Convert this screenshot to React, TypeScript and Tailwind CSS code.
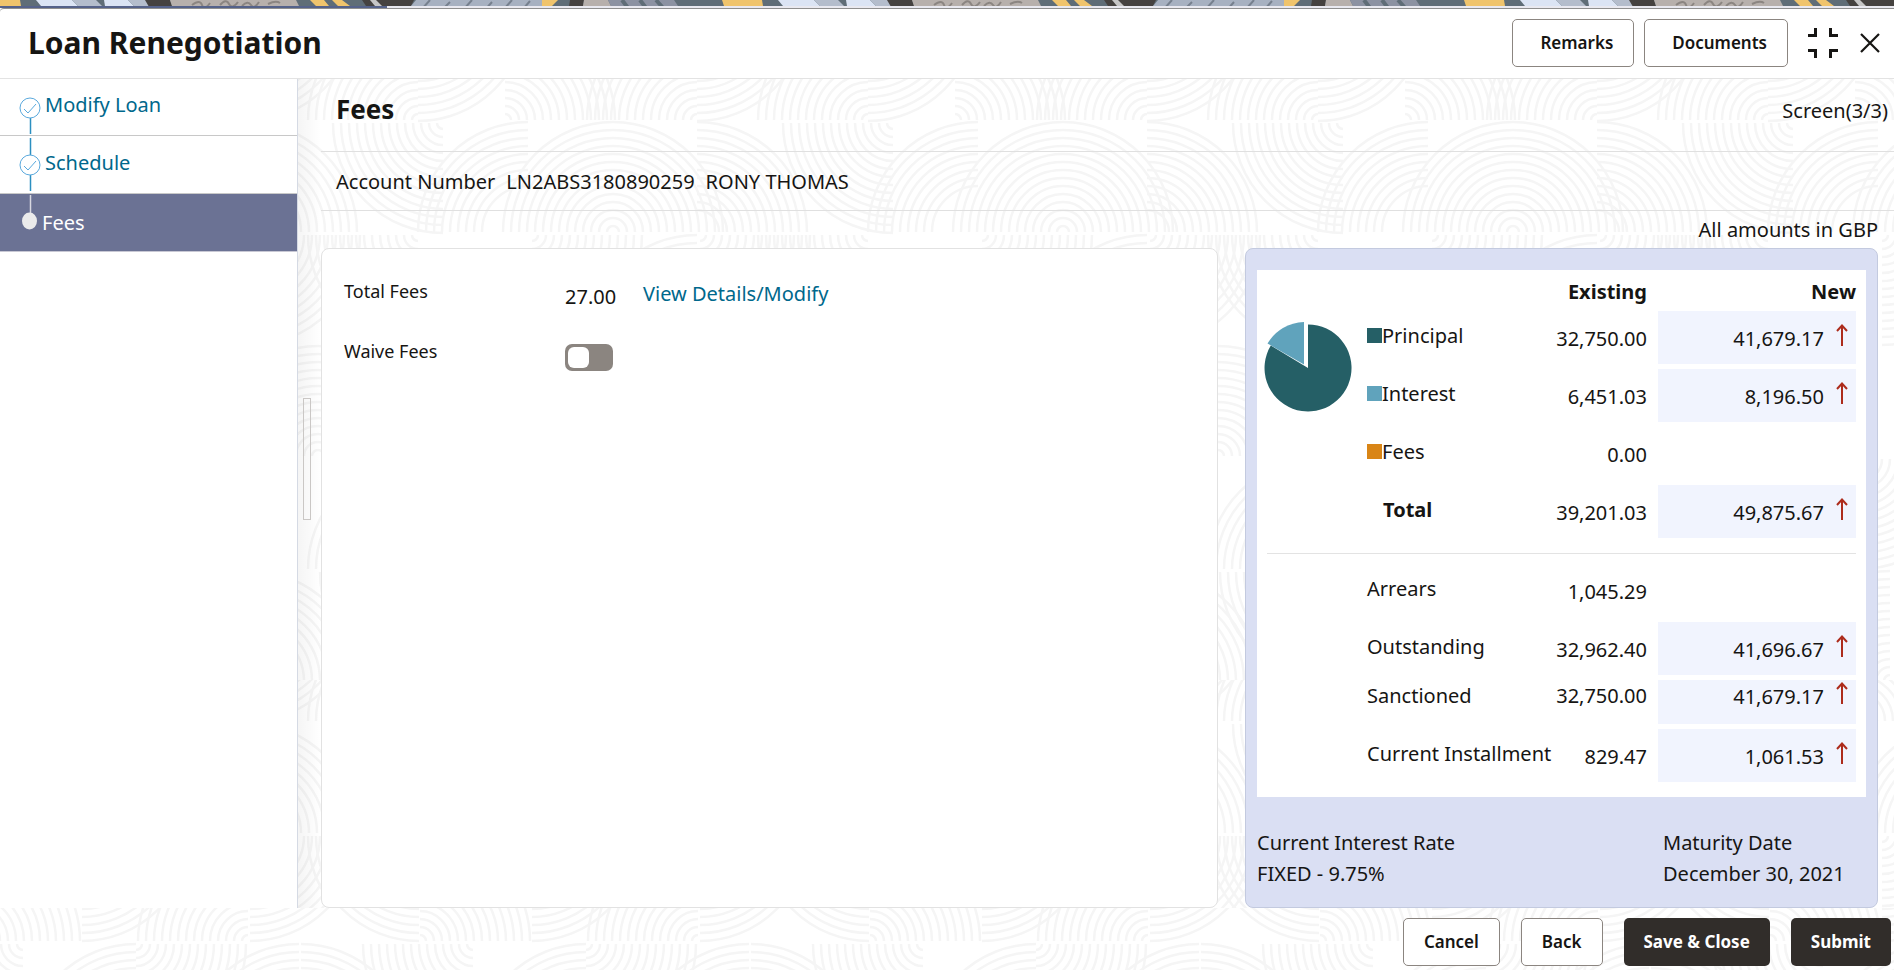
import { useState } from 'react';

type Quadrant = 'UL' | 'UR' | 'LL' | 'LR';
type Fan = { x: number; y: number; q: Quadrant; from?: number; to?: number };

type AmountRow = { label: string; swatch?: string; bold?: boolean; existing: string; next?: string; compact?: boolean };

const TILE_WIDTH = 450;

// Concentric quarter circles that make up the page background
const BODY_FANS: Fan[] = [
    { x: 418, y: 41, q: 'UL' },
    { x: 418, y: -66, q: 'LR', from: 60, to: 108 },
    { x: 247, y: 41, q: 'UL' },
    { x: 247, y: -66, q: 'LR', from: 60, to: 108 },
    { x: 55, y: 41, q: 'UR' },
    { x: 443, y: 44, q: 'LL' },
    { x: 78, y: 153, q: 'UL', from: 40 },
    { x: 163, y: 153, q: 'UL' },
    { x: 163, y: 153, q: 'UR' },
    { x: 247, y: 153, q: 'UR', from: 20 },
    { x: 82, y: 156, q: 'LR' },
    { x: 250, y: 156, q: 'LR' },
    { x: 418, y: 156, q: 'LL' },
    { x: 247, y: 266, q: 'UL', from: 60 },
    { x: 318, y: 377, q: 'UR' },
    { x: 318, y: 377, q: 'UL' },
    { x: 150, y: 377, q: 'UR' },
    { x: 418, y: 490, q: 'UL' },
    { x: 60, y: 380, q: 'LR' },
    { x: 250, y: 602, q: 'UR' },
    { x: 430, y: 493, q: 'LL' },
    { x: 90, y: 602, q: 'UL' },
];

const FOOTER_FANS: Fan[] = [
    { x: 420, y: 33, q: 'UR' },
    { x: 82, y: -75, q: 'LR', from: 60, to: 108 },
    { x: 248, y: 33, q: 'UL' },
    { x: 250, y: -75, q: 'LR', from: 60, to: 108 },
    { x: 419, y: -75, q: 'LL', from: 60, to: 108 },
    { x: 23, y: 36, q: 'LL' },
    { x: 136, y: 36, q: 'LR' },
    { x: 136, y: 146, q: 'UL', from: 40 },
    { x: 299, y: 146, q: 'UL', from: 40 },
    { x: 301, y: 146, q: 'UR', from: 40 },
];

const SUMMARY_ROWS: AmountRow[] = [
    { label: 'Principal', swatch: 'bg-[#255f66]', existing: '32,750.00', next: '41,679.17' },
    { label: 'Interest', swatch: 'bg-[#60a3bc]', existing: '6,451.03', next: '8,196.50' },
    { label: 'Fees', swatch: 'bg-[#d98516]', existing: '0.00' },
    { label: 'Total', bold: true, existing: '39,201.03', next: '49,875.67' },
];

const BALANCE_ROWS: AmountRow[] = [
    { label: 'Arrears', existing: '1,045.29' },
    { label: 'Outstanding', existing: '32,962.40', next: '41,696.67' },
    { label: 'Sanctioned', existing: '32,750.00', next: '41,679.17', compact: true },
    { label: 'Current Installment', existing: '829.47', next: '1,061.53' },
];

const fanPath = ({ x, y, q, from = 6, to = 110 }: Fan) => {
    const dx = q === 'UL' || q === 'LL' ? -1 : 1;
    const dy = q === 'UL' || q === 'UR' ? -1 : 1;
    const sweep = dx * dy === 1 ? 1 : 0;
    let d = '';
    for (let r = to; r >= from; r -= 8) {
        d += `M${x + dx * r} ${y}A${r} ${r} 0 0 ${sweep} ${x} ${y + dy * r}`;
    }
    return d;
};

const Waves = ({ id, fans, height }: { id: string; fans: Fan[]; height: number }) => (
    <svg className="absolute inset-0 w-full h-full -z-10" aria-hidden="true">
        <defs>
            <pattern id={id} width={TILE_WIDTH} height={height} patternUnits="userSpaceOnUse">
                {[-TILE_WIDTH, 0, TILE_WIDTH].map(shift => (
                    <g key={shift} transform={`translate(${shift} 0)`} fill="none" stroke="#f5f5f5" strokeWidth="2.500">
                        {fans.map((fan, i) => <path key={i} d={fanPath(fan)} />)}
                    </g>
                ))}
            </pattern>
        </defs>
        <rect width="100%" height="100%" fill={`url(#${id})`} />
    </svg>
);

const Banner = () => (
    <svg className="block w-full h-[6px]" aria-hidden="true">
        <defs>
            <pattern id="banner" x="-20" width="742" height="12" patternUnits="userSpaceOnUse">
                <rect width="742" height="12" fill="#5f6d77" />
                <path d="M0 0H40L42 12H4Z" fill="#f0c46c" />
                <path d="M56 0H92L104 12H66Z" fill="#dbe4f4" />
                <path d="M92 0H116L128 12H104Z" fill="#b4bdcc" />
                <path d="M124 0H148L160 12H126Z" fill="#dbe4f4" />
                <path d="M148 0H168L174 12H160Z" fill="#b4bdcc" />
                <path d="M165 0H190L194 12H172Z" fill="#454240" />
                <path d="M190 0H316L322 12H194Z" fill="#b7b0ac" />
                <path d="M212 5q8-6 10 0t8-2M240 5q6-7 9-1t9-2M262 6q6-6 9-1t8-3M288 4q8-4 12-1" fill="none" stroke="#8b8581" strokeWidth="2" />
                <path d="M330 0H344L354 12H342ZM352 0H362L370 6H358Z" fill="#f0c46c" />
                <path d="M382 0H434L428 12H390Z" fill="#454240" />
                <path d="M390 0H396L408 12H400Z" fill="#c6c6c6" />
                <path d="M436 0H566L562 12H426Z" fill="#a7b1c1" />
                <path d="M450 0l-8 9M470 2l-8 8M492 0l-8 9M512 2l-7 8M532 0l-7 8M550 1l-6 7" stroke="#76808e" strokeWidth="2" />
                <path d="M562 0H578L566 12H562Z" fill="#f0c46c" />
                <path d="M590 0H604L602 12H588Z" fill="#454240" />
                <path d="M604 0H628L634 12H602Z" fill="#b7b0ac" />
                <path d="M628 0H694L702 12H634Z" fill="#8c92a2" />
                <path d="M642 0l6 8M660 0l6 8M676 0l8 9" stroke="#5f6d77" strokeWidth="4" />
            </pattern>
        </defs>
        <rect width="100%" height="6" fill="url(#banner)" />
    </svg>
);

const UpArrow = () => (
    <svg className="w-3 h-[22px] shrink-0 mb-[7px]" viewBox="0 0 12 22" fill="none" stroke="#ad2c1c" strokeWidth="2" role="img" aria-label="Increased">
        <path d="M6 22V1.500M1 7L6 1.500L11 7" />
    </svg>
);

const PieChart = () => (
    <svg className="w-[90px] h-[94px] -ml-1" viewBox="0 0 90 94" role="img" aria-label="Principal and interest split">
        <path d="M45 49V5.500A43.500 43.500 0 1 1 7.800 26.500Z" fill="#255f66" />
        <path d="M41 45.500V3A43.500 43.500 0 0 0 4.500 24.500Z" fill="#60a3bc" />
    </svg>
);

const AmountCells = ({ row }: { row: AmountRow }) => {
    const size = row.compact ? 'h-[44px] align-top pt-[2px]' : 'h-[53px] align-middle pb-1';
    const align = row.compact ? 'align-top' : 'align-middle';

    return (
        <>
            <th scope="row" className={`${size} text-left whitespace-nowrap ${row.bold ? 'font-bold' : 'font-normal'}`}>
                <span className="flex items-center">
                    {row.swatch && <span className={`w-[15px] h-[15px] ${row.swatch}`}></span>}
                    <span className={row.bold ? 'pl-4' : ''}>{row.label}</span>
                </span>
            </th>
            <td className={`${align} text-right pr-[11px] pt-[2px]`}>{row.existing}</td>
            <td className={row.next ? `${align} bg-[#f1f4fe]` : ''}>
                {row.next && (
                    <span className="flex items-center justify-end gap-3 pr-2 pt-[2px]">
                        <span>{row.next}</span>
                        <UpArrow />
                    </span>
                )}
            </td>
        </>
    );
};

const AmountColumns = () => (
    <colgroup>
        <col className="w-[100px]" />
        <col />
        <col className="w-[104px]" />
        <col className="w-[198px]" />
    </colgroup>
);

const CheckStep = ({ first }: { first?: boolean }) => (
    <svg className="w-6 h-[57px] shrink-0" viewBox="0 0 24 57" fill="none" stroke="#2b8fc0" aria-hidden="true">
        {!first && <path d="M12.500 2V19" strokeWidth="1.500" />}
        <path d="M12.500 39V55" strokeWidth="1.500" />
        <circle cx="12" cy="29" r="10" stroke="#5aa9dd" />
        <path d="M6 30L10 34L18 25" stroke="#5aa9dd" />
    </svg>
);

const outlineButton = 'h-12 rounded-[5px] border border-[#8b8580] bg-white text-[17px] font-semibold cursor-pointer hover:bg-gray-50';
const darkButton = 'h-12 rounded-[5px] bg-[#312d2a] px-5 text-[17px] font-bold text-white cursor-pointer hover:bg-black';

export default function App() {
    const [waive, setWaive] = useState(false);

    return (
        <div className="min-h-screen flex flex-col bg-white text-[#161513] text-[20px] leading-7 font-['Noto_Sans',sans-serif]">
            <Banner />
            <div className="h-[2px] flex bg-[#e9e9f0]">
                <div className="w-[387px] bg-[#55628a]"></div>
            </div>

            <header className="h-[71px] flex items-center border-t border-t-[#8f8f8f] border-b border-b-[#e3e3e3] rounded-tl-sm pl-7 pr-[14px] pb-[2px]">
                <h1 className="text-[30px] leading-9 font-bold">Loan Renegotiation</h1>
                <div className="ml-auto flex items-center">
                    <button type="button" className={`${outlineButton} pl-[27px] pr-5`}>Remarks</button>
                    <button type="button" className={`${outlineButton} ml-[10px] pl-[27px] pr-5`}>Documents</button>
                    <button type="button" aria-label="Collapse" className="ml-5 cursor-pointer">
                        <svg className="w-[30px] h-[30px]" viewBox="0 0 30 30" fill="none" stroke="#161513" strokeWidth="3">
                            <path d="M0 7.500H7.500V0M22.500 0V7.500H30M0 22.500H7.500V30M22.500 30V22.500H30" />
                        </svg>
                    </button>
                    <button type="button" aria-label="Close" className="ml-[22px] cursor-pointer">
                        <svg className="w-5 h-5" viewBox="0 0 20 20" fill="none" stroke="#161513" strokeWidth="2.200">
                            <path d="M1 1L19 19M19 1L1 19" />
                        </svg>
                    </button>
                </div>
            </header>

            <div className="flex-1 flex relative isolate">
                <Waves id="waves-body" fans={BODY_FANS} height={601} />

                <nav aria-label="Steps" className="w-[298px] shrink-0 bg-white border-r border-[#d5dae4]">
                    <ol>
                        <li className="h-[57px] flex items-center pl-[18px] border-b border-[#c8c8c8]">
                            <CheckStep first />
                            <a href="#modify" className="pl-[3px] pb-1 text-[#00688c]">Modify Loan</a>
                        </li>
                        <li className="h-[58px] flex items-center pl-[18px] border-b border-[#c8c8c8]">
                            <CheckStep />
                            <a href="#schedule" className="pl-[3px] pb-1 text-[#00688c]">Schedule</a>
                        </li>
                        <li className="h-[58px] flex items-center pl-[18px] border-b border-[#c8c8d4] bg-[#6b7294] text-white">
                            <svg className="w-6 h-[57px] shrink-0" viewBox="0 0 24 57" aria-hidden="true">
                                <path d="M12.500 1V22" stroke="#d8d8e0" strokeWidth="1.500" />
                                <ellipse cx="11.500" cy="27" rx="7.500" ry="8.500" fill="#ebebeb" />
                            </svg>
                            <a href="#fees" aria-current="step">Fees</a>
                        </li>
                    </ol>
                </nav>

                <div className="w-[23px] shrink-0 pl-[5px] pt-[319px] bg-linear-to-r from-black/4 to-transparent">
                    <div className="w-2 h-[122px] border border-[#cac7c5]"></div>
                </div>

                <main className="flex-1 min-w-0 flex flex-col">
                    <div className="h-[73px] flex justify-between pt-[14px] pl-[15px] pr-[6px] border-b border-[#e0e0e0]">
                        <h2 className="text-[26px] leading-8 font-bold">Fees</h2>
                        <p className="pt-1">Screen(3/3)</p>
                    </div>
                    <div className="h-[59px] flex items-center gap-[11px] pl-[15px] pt-[2px] border-b border-[#e0e0e0]">
                        <span>Account Number</span>
                        <span>LN2ABS3180890259</span>
                        <span>RONY THOMAS</span>
                    </div>
                    <p className="h-[37px] pt-[5px] pr-4 text-right">All amounts in GBP</p>

                    <div className="flex-1 grid grid-cols-12 gap-x-[27px] pr-4">
                        <section className="col-span-7 bg-white border border-[#e2e2e2] rounded-lg pl-[22px] pt-[28px]">
                            <div className="flex items-start">
                                <span className="w-[221px] text-[18px]">Total Fees</span>
                                <span className="w-[78px] pt-[6px]">27.00</span>
                                <a href="#details" className="pt-[3px] text-[#00688c]">View Details/Modify</a>
                            </div>
                            <div className="flex items-start mt-[26px]">
                                <label htmlFor="waive" className="w-[221px] text-[18px]">Waive Fees</label>
                                <input
                                    id="waive"
                                    type="checkbox"
                                    role="switch"
                                    checked={waive}
                                    onChange={e => setWaive(e.target.checked)}
                                    className="appearance-none w-12 h-[27px] mt-[7px] p-[3px] rounded-[7px] bg-[#8b8580] cursor-pointer before:block before:w-[21px] before:h-[21px] before:rounded-[6px] before:bg-white checked:bg-[#00688c] checked:before:ml-auto"
                                />
                            </div>
                        </section>

                        <section className="col-span-5 bg-[#dadff3] border border-[#c3cadf] rounded-lg px-[11px] pt-[21px] pb-4">
                            <div className="bg-white px-[10px] pb-[10px]">
                                <table className="w-full table-fixed border-separate border-spacing-x-0 border-spacing-y-[5px]">
                                    <AmountColumns />
                                    <thead>
                                        <tr>
                                            <td className="h-[31px]"></td>
                                            <td></td>
                                            <th scope="col" className="text-right pr-[11px] pt-[3px]">Existing</th>
                                            <th scope="col" className="text-right pt-[3px]">New</th>
                                        </tr>
                                    </thead>
                                    <tbody>
                                        {SUMMARY_ROWS.map((row, i) => (
                                            <tr key={row.label}>
                                                {i === 0 && (
                                                    <td rowSpan={4} className="align-top pt-[8px]"><PieChart /></td>
                                                )}
                                                <AmountCells row={row} />
                                            </tr>
                                        ))}
                                    </tbody>
                                </table>
                                <hr className="mt-[10px] mb-[5px] border-[#e3e3e3]" />
                                <table className="w-full table-fixed border-separate border-spacing-x-0 border-spacing-y-[5px]">
                                    <AmountColumns />
                                    <tbody>
                                        {BALANCE_ROWS.map(row => (
                                            <tr key={row.label}>
                                                <td></td>
                                                <AmountCells row={row} />
                                            </tr>
                                        ))}
                                    </tbody>
                                </table>
                            </div>
                            <dl className="grid grid-cols-3 pt-[30px] leading-[31px]">
                                <div className="col-span-2">
                                    <dt>Current Interest Rate</dt>
                                    <dd>FIXED - 9.75%</dd>
                                </div>
                                <div>
                                    <dt>Maturity Date</dt>
                                    <dd>December 30, 2021</dd>
                                </div>
                            </dl>
                        </section>
                    </div>
                </main>
            </div>

            <footer className="h-[62px] relative isolate flex justify-end gap-[21px] pt-[10px] pr-[3px]">
                <Waves id="waves-footer" fans={FOOTER_FANS} height={300} />
                <button type="button" className={`${outlineButton} px-5`}>Cancel</button>
                <button type="button" className={`${outlineButton} px-5`}>Back</button>
                <button type="button" className={darkButton}>Save &amp; Close</button>
                <button type="button" className={darkButton}>Submit</button>
            </footer>
        </div>
    );
}
